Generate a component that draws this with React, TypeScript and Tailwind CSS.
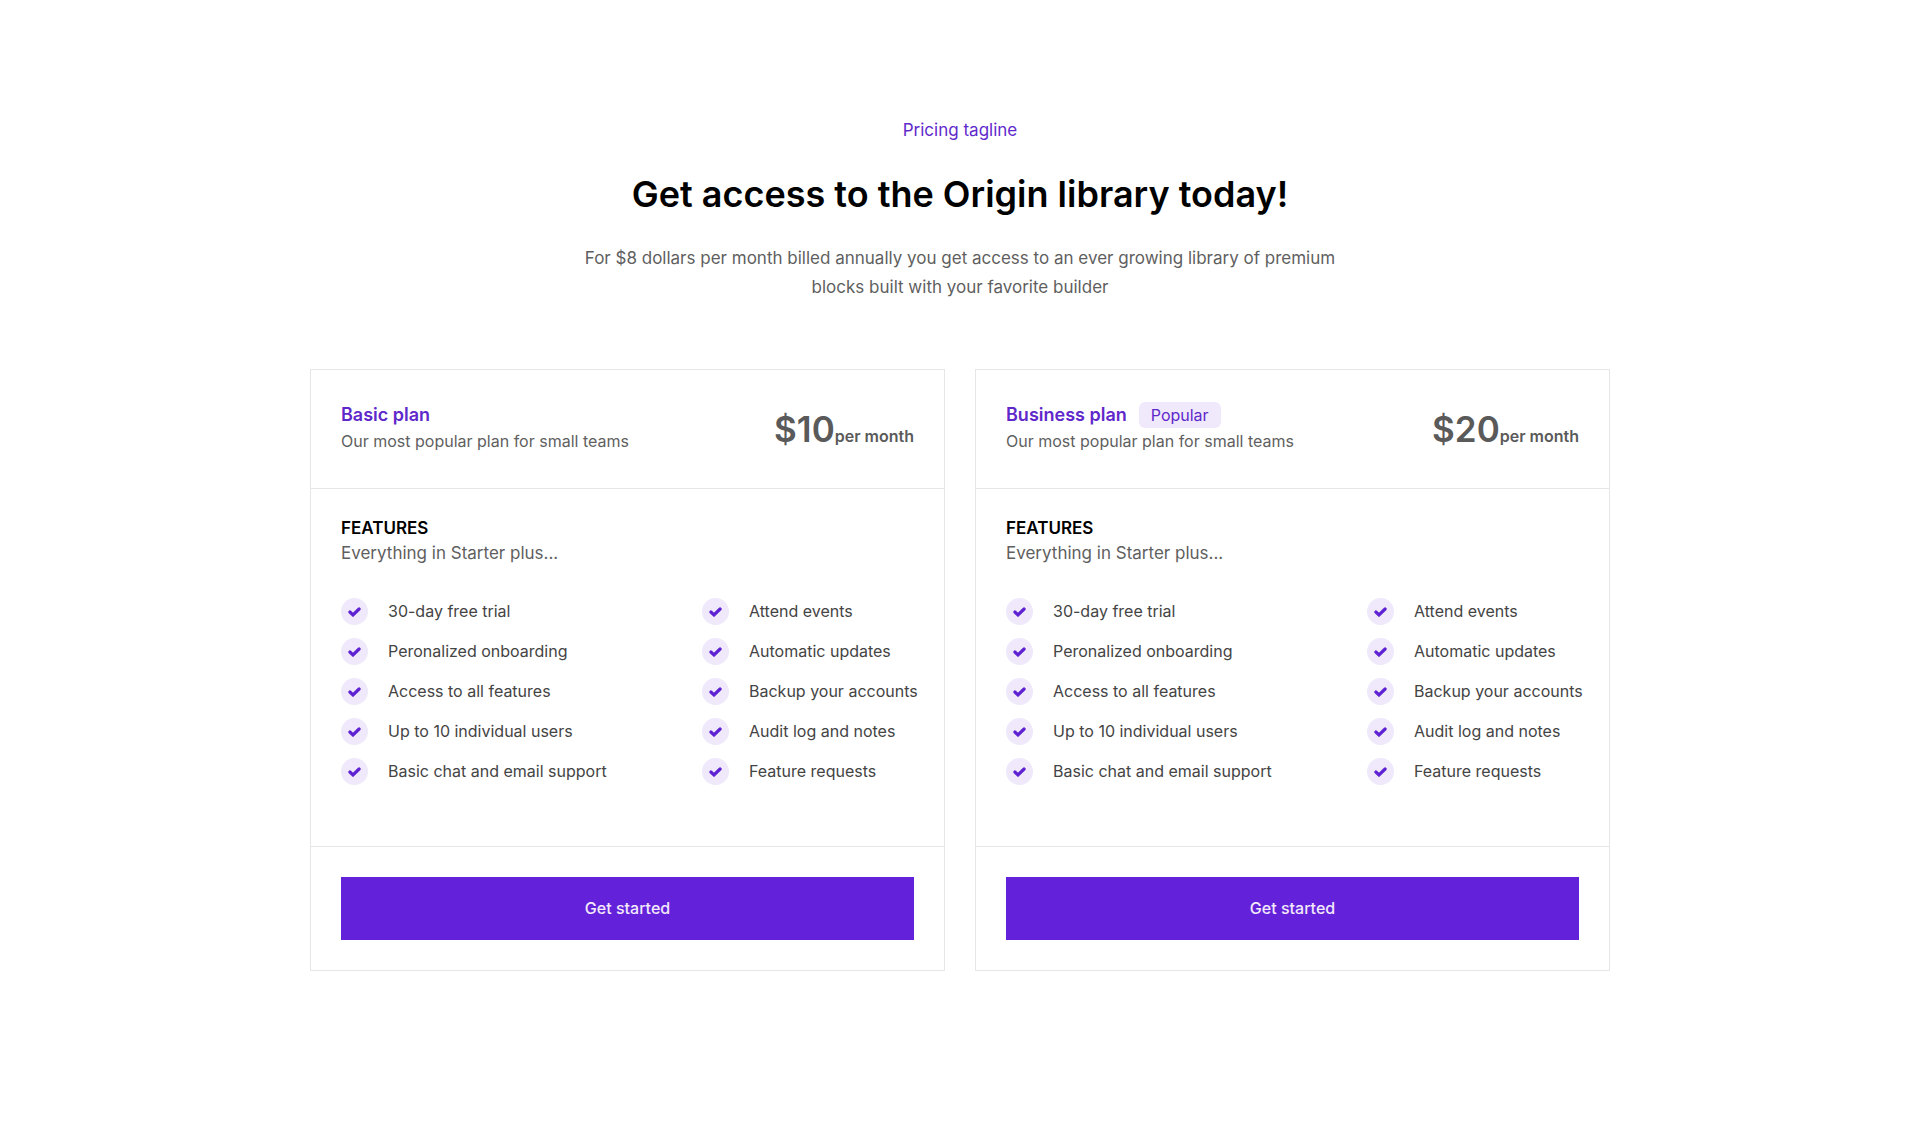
type Plan = { name: string; price: string; popular?: boolean };

const plans: Plan[] = [
  { name: "Basic plan", price: "$10" },
  { name: "Business plan", price: "$20", popular: true },
];

const mainFeatures = [
  "30-day free trial",
  "Peronalized onboarding",
  "Access to all features",
  "Up to 10 individual users",
  "Basic chat and email support",
];

const extraFeatures = [
  "Attend events",
  "Automatic updates",
  "Backup your accounts",
  "Audit log and notes",
  "Feature requests",
];

function CheckBadge() {
  return (
    <span className="flex size-[27px] shrink-0 items-center justify-center rounded-full bg-[#efe9fb]">
      <svg viewBox="0 0 13 10" className="h-[10px] w-[13px]" fill="none" aria-hidden="true">
        <path
          d="M1.9 5 L5 7.9 L11.1 2"
          stroke="#5f22d3"
          strokeWidth="3.2"
          strokeLinecap="round"
          strokeLinejoin="miter"
        />
      </svg>
    </span>
  );
}

function FeatureList({ items }: { items: string[] }) {
  return (
    <ul className="flex flex-col gap-[13px]">
      {items.map((item) => (
        <li key={item} className="flex items-center gap-5">
          <CheckBadge />
          <span className="text-base leading-[27px] whitespace-nowrap text-[#444444]">{item}</span>
        </li>
      ))}
    </ul>
  );
}

function PlanCard({ plan }: { plan: Plan }) {
  return (
    <article className="flex flex-col border border-[#e6e6e6]">
      <header className="flex items-center justify-between gap-4 border-b border-[#e6e6e6] px-[30px] pt-8 pb-[33px]">
        <div>
          <div className="flex items-center gap-3">
            <h2 className="text-lg leading-[26px] font-semibold text-[#5f28cb]">{plan.name}</h2>
            {plan.popular && (
              <span className="rounded-md bg-[#efe9fb] px-3 text-base leading-[26px] text-[#5f28cb]">Popular</span>
            )}
          </div>
          <p className="text-base leading-[27px] text-[#5f5f5f]">Our most popular plan for small teams</p>
        </div>
        <p className="flex items-baseline font-semibold whitespace-nowrap text-[#5a5a5a]">
          <span className="text-[35px] leading-[46px]">{plan.price}</span>
          <span className="text-base">per month</span>
        </p>
      </header>
      <div className="px-[30px] pt-[27px] pb-[61px]">
        <h3 className="text-[17px] leading-[25px] font-semibold text-black">FEATURES</h3>
        <p className="text-[17px] leading-[25px] text-[#5f5f5f]">Everything in Starter plus...</p>
        <div className="mt-8 flex flex-wrap justify-between gap-6">
          <FeatureList items={mainFeatures} />
          <div className="w-[212px]">
            <FeatureList items={extraFeatures} />
          </div>
        </div>
      </div>
      <footer className="border-t border-[#e6e6e6] p-[30px]">
        <button type="button" className="w-full bg-[#6322d9] py-5 text-base leading-[23px] font-medium text-[#f3e9fb]">
          Get started
        </button>
      </footer>
    </article>
  );
}

export default function App() {
  return (
    <main className="min-h-screen bg-white px-6 pt-[116px] pb-[168px] font-['Inter',sans-serif]">
      <div className="mx-auto max-w-[1300px]">
        <div className="mx-auto max-w-[800px] text-center">
          <p className="text-[17px] leading-[29px] text-[#5f28cb]">Pricing tagline</p>
          <h1 className="mt-[26px] text-4xl leading-[46px] font-semibold text-black">
            Get access to the Origin library today!
          </h1>
          <p className="mt-[27px] text-[17px] leading-[29px] text-[#5f5f5f]">
            For $8 dollars per month billed annually you get access to an ever growing library of premium blocks built
            with your favorite builder
          </p>
        </div>
        <div className="mt-[67px] grid gap-[30px] md:grid-cols-2">
          {plans.map((plan) => (
            <PlanCard key={plan.name} plan={plan} />
          ))}
        </div>
      </div>
    </main>
  );
}
